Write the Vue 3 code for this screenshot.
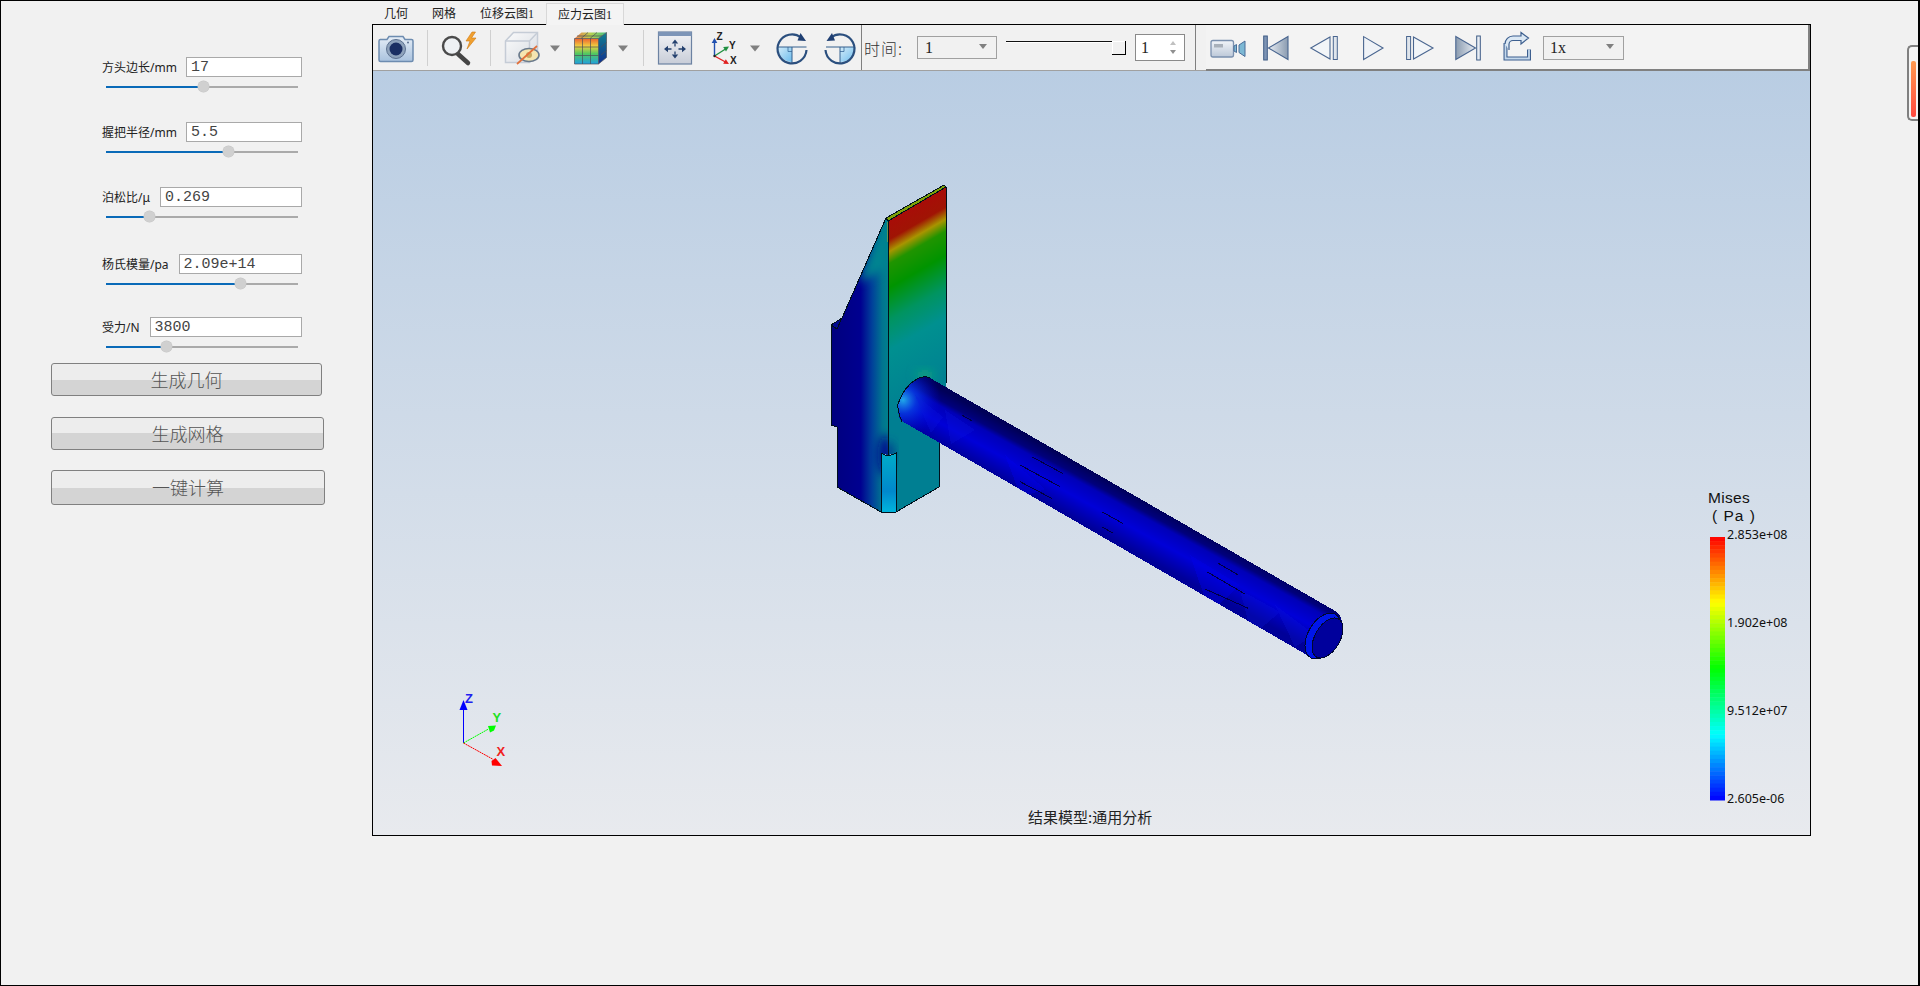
<script setup>
const params = [
  { label: '方头边长/mm', value: '17', pct: 50.5 },
  { label: '握把半径/mm', value: '5.5', pct: 63.5 },
  { label: '泊松比/μ', value: '0.269', pct: 22.4 },
  { label: '杨氏模量/pa', value: '2.09e+14', pct: 69.8 },
  { label: '受力/N', value: '3800', pct: 31.3 },
]
const actions = ['生成几何', '生成网格', '一键计算']
const tabs = ['几何', '网格', '位移云图1', '应力云图1']

function jet(t) {
  const stops = [[255, 0, 0], [255, 255, 0], [0, 255, 0], [0, 255, 255], [0, 0, 255]]
  const p = t * 4
  const i = Math.min(3, Math.floor(p))
  const f = p - i
  const c = stops[i].map((v, k) => Math.round(v + (stops[i + 1][k] - v) * f))
  return `rgb(${c[0]},${c[1]},${c[2]})`
}
const bands = Array.from({ length: 64 }, (_, i) => ({
  y: 537 + (i * 263) / 64,
  h: 263 / 64 + 0.5,
  fill: jet((i + 0.5) / 64),
}))
const legend = [
  { y: 539, t: '2.853e+08' },
  { y: 627, t: '1.902e+08' },
  { y: 715, t: '9.512e+07' },
  { y: 803, t: '2.605e-06' },
]
const handleMarks = [
  [245, 165, 275, 182], [455, 290, 548, 340], [420, 315, 540, 380], [420, 365, 515, 415],
  [665, 455, 728, 490], [665, 500, 700, 520], [1015, 610, 1075, 645], [980, 635, 1095, 702], [975, 687, 1105, 745],
].map(([a, b, c, d]) => ({ x1: 880 + a / 3, y1: 360 + b / 3, x2: 880 + c / 3, y2: 360 + d / 3 }))
</script>

<template>
  <div class="window">
    <aside class="side">
      <div v-for="p in params" :key="p.label" class="param">
        <div class="param-top">
          <span class="param-label">{{ p.label }}</span>
          <div class="param-input">{{ p.value }}</div>
        </div>
        <div class="track">
          <div class="track-fill" :style="{ width: p.pct + '%' }"></div>
          <div class="thumb" :style="{ left: p.pct + '%' }"></div>
        </div>
      </div>
      <div class="actions">
        <button v-for="a in actions" :key="a" class="action">{{ a }}</button>
      </div>
    </aside>

    <main class="main">
      <nav class="tabs">
        <span v-for="(t, i) in tabs" :key="t" class="tab" :class="{ active: i === 3 }">{{ t }}</span>
      </nav>
      <section class="frame">
        <div class="tb">
          <div class="tb-left">
            <svg class="ic ml6" width="34" height="36" viewBox="379 30 34 36">
              <defs>
                <linearGradient id="camBody" x1="0" y1="0" x2="0" y2="1"><stop offset="0" stop-color="#e6eef7"/><stop offset="1" stop-color="#a9c2de"/></linearGradient>
              </defs>
              <path d="M380 39.500h7l2-3h14l2 3h6.500a1.500 1.500 0 0 1 1.500 1.500v19a1.500 1.500 0 0 1-1.500 1.500h-31a1.500 1.500 0 0 1-1.500-1.500v-19a1.500 1.500 0 0 1 1.500-1.500z" fill="url(#camBody)" stroke="#6d8cb0" stroke-width="1.500"/>
              <circle cx="396" cy="49" r="9.500" fill="#8fa3bc" stroke="#5c7190" stroke-width="1"/>
              <circle cx="396" cy="49" r="6.500" fill="#1b2f63"/>
              <circle cx="408" cy="42.500" r="1" fill="#5c7190"/>
            </svg>
            <span class="sep ml14"></span>
            <svg class="ic ml14" width="34" height="36" viewBox="442 30 34 36">
              <path d="M472 32l-6 9h4l-3 8 9-11h-4.500l4-6z" fill="#f0a030" stroke="#d07a10" stroke-width=".6"/>
              <path d="M458 54l10 9" stroke="#454545" stroke-width="4.500" stroke-linecap="round"/>
              <circle cx="452" cy="46" r="9" fill="#eef1f4" stroke="#4a4a4a" stroke-width="2.400"/>
            </svg>
            <span class="sep ml14"></span>
            <svg class="ic ml14" width="35" height="36" viewBox="505 30 35 36">
              <defs>
                <linearGradient id="cubeFront" x1="0" y1="0" x2="1" y2="1"><stop offset="0" stop-color="#fbfbfb"/><stop offset="1" stop-color="#d6dbe2"/></linearGradient>
              </defs>
              <path d="M505.500 41l8-8.500h24v21l-8 9h-24z" fill="url(#cubeFront)" stroke="#c5ccd6" stroke-width="1.500"/>
              <path d="M505.500 41h24l8-8.500M529.500 41v22" fill="none" stroke="#c5ccd6" stroke-width="1.500"/>
              <ellipse cx="529" cy="55" rx="10" ry="6.500" fill="#f5e5b0" stroke="#6a7a8c" stroke-width="1.600"/>
              <circle cx="529" cy="55" r="3" fill="#c8a860"/>
              <path d="M517 64l20-18" stroke="#e2703a" stroke-width="1.700"/>
            </svg>
            <svg class="ic ml10" width="10" height="36" viewBox="550 30 10 36"><path d="M550 45.500h10l-5 6z" fill="#808080"/></svg>
            <svg class="ic ml14" width="34" height="36" viewBox="574 30 34 36">
              <defs>
                <linearGradient id="rubF" x1="0" y1="0" x2="0" y2="1"><stop offset="0" stop-color="#ee6030"/><stop offset=".3" stop-color="#f0d040"/><stop offset=".6" stop-color="#50c860"/><stop offset="1" stop-color="#20a0e0"/></linearGradient>
                <linearGradient id="rubT" x1="0" y1="0" x2="1" y2="0"><stop offset="0" stop-color="#f08050"/><stop offset=".5" stop-color="#b8d050"/><stop offset="1" stop-color="#40c080"/></linearGradient>
                <linearGradient id="rubR" x1="0" y1="0" x2="0" y2="1"><stop offset="0" stop-color="#108090"/><stop offset="1" stop-color="#103090"/></linearGradient>
              </defs>
              <path d="M574.500 38.500h24v25.500h-24z" fill="url(#rubF)"/>
              <path d="M574.500 38.500l7-6h25l-8 6z" fill="url(#rubT)"/>
              <path d="M598.500 38.500l8-6v25l-8 6.500z" fill="url(#rubR)"/>
              <path d="M574.500 38.500h24v25.500h-24zM582.500 38.500v25.500M590.500 38.500v25.500M574.500 47h24M574.500 55.500h24M598.500 38.500l8-6v25l-8 6.500M601 47l5.500-4.500M601 55l5.500-4.500M581 38.500l7-6M590 38.500l7-6M577 36h25" fill="none" stroke="#4a4f58" stroke-width=".7"/>
            </svg>
            <svg class="ic ml10" width="10" height="36" viewBox="618 30 10 36"><path d="M618 45.500h10l-5 6z" fill="#808080"/></svg>
            <span class="sep ml15"></span>
            <svg class="ic ml14" width="34" height="36" viewBox="658 30 34 36">
              <defs>
                <linearGradient id="fitB" x1="0" y1="0" x2="0" y2="1"><stop offset="0" stop-color="#f2f3f6"/><stop offset="1" stop-color="#c8cdd8"/></linearGradient>
              </defs>
              <rect x="658.500" y="32" width="33" height="32" fill="url(#fitB)" stroke="#6c82a2" stroke-width="1.200"/>
              <rect x="658.500" y="32" width="33" height="4" fill="#7d95b8"/>
              <path d="M675 39.500l-3.200 4h6.400zM675 58.500l-3.200-4h6.400zM664 49l4-3.200v6.400zM686 49l-4-3.200v6.400z" fill="#24406e"/>
              <path d="M675 43.500v3M675 51.500v3M668 49h3.500M678.500 49h3.500" stroke="#24406e" stroke-width="1.300"/>
            </svg>
            <svg class="ic ml20" width="28" height="36" viewBox="712 30 28 36">
              <path d="M714.500 56V42" stroke="#2050b0" stroke-width="1.400"/>
              <path d="M714.500 38l-2.800 5h5.600z" fill="#2050b0"/>
              <path d="M714.500 56l11-7" stroke="#209040" stroke-width="1.400"/>
              <path d="M729 46.500l-5.800.5 2.800 4.400z" fill="#209040"/>
              <path d="M714.500 56l11 6" stroke="#e02020" stroke-width="1.400"/>
              <path d="M729 64l-5.800-.2 2.600-4.600z" fill="#e02020"/>
              <circle cx="714.500" cy="56" r="1.200" fill="#222"/>
              <text x="716.500" y="39.500" class="axis-letter">Z</text>
              <text x="729" y="49" class="axis-letter">Y</text>
              <text x="730" y="64" class="axis-letter">X</text>
            </svg>
            <svg class="ic ml10" width="10" height="36" viewBox="750 30 10 36"><path d="M750 45.500h10l-5 6z" fill="#808080"/></svg>
            <svg class="ic ml16" width="32" height="36" viewBox="776 30 32 36">
              <defs>
                <linearGradient id="rotF" x1="0" y1="0" x2="1" y2="1"><stop offset="0" stop-color="#d4ecf9"/><stop offset="1" stop-color="#6cbcec"/></linearGradient>
              </defs>
              <path d="M777.500 47h14.500v15A15 15 0 0 1 777.500 47z" fill="url(#rotF)"/>
              <path d="M788 47v4.500h4" fill="none" stroke="#3a6a9a" stroke-width=".8"/>
              <path d="M777.500 47h29M792 47v16" stroke="#35608e" stroke-width="1"/>
              <path d="M801 37.500A14.500 14.500 0 1 0 806.500 50" fill="none" stroke="#2b4f7e" stroke-width="2.200"/>
              <path d="M806 41l-8.500-.5 3-7.500z" fill="#1f3f72"/>
            </svg>
            <svg class="ic ml17" width="32" height="36" viewBox="825 30 32 36">
              <path d="M855.500 47h-15.500v15a15 15 0 0 0 15.500-15z" fill="url(#rotF)"/>
              <path d="M844 47v4.500h-4" fill="none" stroke="#3a6a9a" stroke-width=".8"/>
              <path d="M826 47h29M840 47v16" stroke="#35608e" stroke-width="1"/>
              <path d="M831 37.500A14.500 14.500 0 1 1 825.500 50" fill="none" stroke="#2b4f7e" stroke-width="2.200"/>
              <path d="M826.500 41l8.500-.5-3-7.500z" fill="#1f3f72"/>
            </svg>
            <span class="sep-dark ml4"></span>
            <span class="time-label">时间:</span>
            <div class="combo combo-time"><span>1</span><i class="caret"></i></div>
            <div class="hslider"><div class="hslider-line"></div><div class="hslider-knob"></div></div>
            <div class="spin"><span>1</span><div class="spin-arrows"><i class="up"></i><i class="down"></i></div></div>
            <span class="sep-dark ml10"></span>
          </div>
          <div class="tb-right">
            <svg class="ic ml4" width="36" height="36" viewBox="1210 30 36 36">
              <defs>
                <linearGradient id="cc" x1="0" y1="0" x2="0" y2="1"><stop offset="0" stop-color="#f2f5f9"/><stop offset="1" stop-color="#bcc8d8"/></linearGradient>
              </defs>
              <rect x="1211" y="40.500" width="22.500" height="16.500" rx="2" fill="url(#cc)" stroke="#7a90ae" stroke-width="1.300"/>
              <rect x="1214" y="44" width="9" height="3.500" fill="#a8b0ba"/>
              <path d="M1234 46l2.500-1.500v8L1234 51zM1239 45l6-4v15.500l-6-4z" fill="#7cb8d4" stroke="#4a6c98" stroke-width="1"/>
            </svg>
            <svg class="ic ml17" width="26" height="36" viewBox="1263 30 26 36">
              <defs>
                <linearGradient id="tg" x1="0" y1="0" x2="1" y2="0"><stop offset="0" stop-color="#e8edf3"/><stop offset="1" stop-color="#8a9bb0"/></linearGradient>
                <linearGradient id="tgr" x1="0" y1="0" x2="1" y2="0"><stop offset="0" stop-color="#8a9bb0"/><stop offset="1" stop-color="#e8edf3"/></linearGradient>
              </defs>
              <rect x="1263.700" y="36" width="3.600" height="24" fill="#7d94b4" stroke="#3f5c86" stroke-width="1"/>
              <path d="M1268.500 48l19.500-11.500v23z" fill="url(#tg)" stroke="#4a6690" stroke-width="1.100"/>
            </svg>
            <svg class="ic ml21" width="28" height="36" viewBox="1310 30 28 36">
              <path d="M1310.800 48l19.200-11v22z" fill="#f2f5f8" stroke="#4a6690" stroke-width="1.100"/>
              <rect x="1333.300" y="36.500" width="4" height="23" fill="#dfe5ec" stroke="#4a6690" stroke-width="1"/>
            </svg>
            <svg class="ic ml25" width="21" height="36" viewBox="1363 30 21 36">
              <path d="M1363.600 36.600l19.400 11.400-19.400 11.500z" fill="#f0f3f7" stroke="#4a6690" stroke-width="1.100"/>
            </svg>
            <svg class="ic ml22" width="28" height="36" viewBox="1406 30 28 36">
              <rect x="1406.600" y="36.500" width="4" height="23" fill="#dfe5ec" stroke="#4a6690" stroke-width="1"/>
              <path d="M1413.500 37l19.500 11-19.500 11z" fill="#f2f5f8" stroke="#4a6690" stroke-width="1.100"/>
            </svg>
            <svg class="ic ml21" width="26" height="36" viewBox="1455 30 26 36">
              <path d="M1455.800 36.500l19.700 11.500-19.700 11.500z" fill="url(#tgr)" stroke="#4a6690" stroke-width="1.100"/>
              <rect x="1476.700" y="36" width="3.600" height="24" fill="#e8edf3" stroke="#3f5c86" stroke-width="1"/>
            </svg>
            <svg class="ic ml22" width="28" height="36" viewBox="1503 30 28 36">
              <path d="M1505.500 43v15.500h23.500v-9" fill="none" stroke="#3d5f8f" stroke-width="4"/>
              <path d="M1505.500 43v15.500h23.500v-9" fill="none" stroke="#c4d8ec" stroke-width="1.800"/>
              <path d="M1509 50v-5.500a4 4 0 0 1 4-4h8V44l7.500-6-7.500-5.500V36h-8a8 8 0 0 0-8 8" fill="#dbe8f4" stroke="#3d5f8f" stroke-width="1.200"/>
            </svg>
            <div class="combo combo-speed"><span>1x</span><i class="caret"></i></div>
          </div>
        </div>

        <div class="view">
          <svg class="scene" width="1437" height="764" viewBox="373 71 1437 764">
            <defs>
              <linearGradient id="rightFace" gradientUnits="userSpaceOnUse" x1="916" y1="204" x2="1003" y2="355">
                <stop offset="0" stop-color="#a80c08"/>
                <stop offset=".1" stop-color="#a01404"/>
                <stop offset=".16" stop-color="#a89400"/>
                <stop offset=".22" stop-color="#209400"/>
                <stop offset=".34" stop-color="#009400"/>
                <stop offset=".5" stop-color="#009460"/>
                <stop offset=".65" stop-color="#009090"/>
                <stop offset="1" stop-color="#007f92"/>
              </linearGradient>
              <linearGradient id="leftFace" gradientUnits="userSpaceOnUse" x1="831" y1="0" x2="888" y2="0">
                <stop offset="0" stop-color="#00007e"/>
                <stop offset=".52" stop-color="#000090"/>
                <stop offset=".72" stop-color="#00409a"/>
                <stop offset=".9" stop-color="#007490"/>
                <stop offset="1" stop-color="#00808c"/>
              </linearGradient>
              <linearGradient id="slotFace" x1="0" y1="0" x2="0" y2="1">
                <stop offset="0" stop-color="#00acc8"/>
                <stop offset=".65" stop-color="#0088cc"/>
                <stop offset="1" stop-color="#00b4dc"/>
              </linearGradient>
              <linearGradient id="handleG" gradientUnits="userSpaceOnUse" x1="1100" y1="476" x2="1076" y2="520">
                <stop offset="0" stop-color="#000058"/>
                <stop offset=".2" stop-color="#00007c"/>
                <stop offset=".3" stop-color="#0000b8"/>
                <stop offset=".6" stop-color="#0000d8"/>
                <stop offset=".85" stop-color="#0000b0"/>
                <stop offset="1" stop-color="#000098"/>
              </linearGradient>
              <radialGradient id="handleGlow" gradientUnits="userSpaceOnUse" cx="903" cy="400" r="38">
                <stop offset="0" stop-color="#20a8e8"/>
                <stop offset=".35" stop-color="#0840e0" stop-opacity=".8"/>
                <stop offset="1" stop-color="#0000d8" stop-opacity="0"/>
              </radialGradient>
              <filter id="soft" x="-50%" y="-50%" width="200%" height="200%"><feGaussianBlur stdDeviation="5"/></filter>
              <clipPath id="leftClip"><path d="M888 221L886 219L842 318L837 329L831 325V425L837 427V487L881 512V453L888 455z"/></clipPath>
              <clipPath id="rightClip"><path d="M888 221L946 187V383L939 443V487L896 512V453L888 455z"/></clipPath>
              <clipPath id="handleClip"><path d="M930 378L1337 612Q1344 618 1342 633Q1338 650 1317 659L1307 655L900 420Q897 410 898 404Q904 386 917 379Q924 375 930 378z"/></clipPath>
            </defs>

            <g>
              <path d="M463.500 743V708" stroke="#0000ff" stroke-width="1"/>
              <path d="M463.500 700l-4 10h8z" fill="#0000ff"/>
              <text x="465" y="703" fill="#2020f0" class="triad-letter">Z</text>
              <path d="M463.500 743l25-14" stroke="#00ff00" stroke-width="1" stroke-dasharray="2 .6"/>
              <path d="M496 725.500l-8 .5 2 6.500 4-2z" fill="#00ff00"/>
              <text x="492.500" y="722" fill="#20e020" class="triad-letter">Y</text>
              <path d="M463.500 743l29 16" stroke="#ff0000" stroke-width="1" stroke-dasharray="2 .6"/>
              <path d="M502 766l-10-.5-.5-4.500 4-3z" fill="#ff0000"/>
              <text x="496.500" y="756" fill="#f02020" class="triad-letter">X</text>
            </g>

            <g class="model">
              <path d="M888 221L886 219L842 318L837 329L831 325V425L837 427V487L881 512V453L888 455z" fill="url(#leftFace)"/>
              <path d="M842 318L837 329L831 325z" fill="#000a90"/>
              <g clip-path="url(#leftClip)">
                <path d="M886 219L858 282L872 276L888 268V219z" fill="#008490" filter="url(#soft)"/>
                <ellipse cx="885" cy="455" rx="7" ry="20" fill="#000a90" filter="url(#soft)"/>
              </g>
              <path d="M888 221L946 187V383L939 443V487L896 512V453L888 455z" fill="url(#rightFace)"/>
              <g clip-path="url(#rightClip)">
                <ellipse cx="925" cy="375" rx="10" ry="5" fill="#10a080" filter="url(#soft)"/>
                <ellipse cx="889" cy="455" rx="5" ry="14" fill="#003a90" filter="url(#soft)"/>
              </g>
              <path d="M886 218L944 185L946 187L888 221z" fill="#7ca008"/>
              <path d="M887 222L889 262" stroke="#a0a030" stroke-width="1" opacity=".6"/>
              <path d="M881 453Q888 458 896 453V512H881z" fill="url(#slotFace)"/>
              <path d="M886 218L842 318L837 329L831 325V425L837 427V487L881 512H896L939 487V443M946 383V187L944 185L886 218M831 325L842 318M888.500 221V455M881 512V453Q888 458 896 453V512M886 218L888 221L946 187" fill="none" stroke="#00101c" stroke-width="1"/>
              <path d="M930 378L1337 612Q1344 618 1342 633Q1338 650 1317 659L1307 655L900 420Q897 410 898 404Q904 386 917 379Q924 375 930 378z" fill="url(#handleG)"/>
              <g clip-path="url(#handleClip)">
                <path d="M930 378L1000 418L960 470L900 420Q897 410 898 404Q904 386 917 379Q924 375 930 378z" fill="url(#handleGlow)"/>
                <path d="M915 395l28 22-12 16zM945 410l30 20-24 14zM1240 590l40 22-28 24zM1275 605l40 30-20 12z" fill="#0a18e0" opacity=".25"/>
                <path d="M1190 555l50 30-30 28zM1005 455l40 34-24 8z" fill="#0000e8" opacity=".4"/>
              </g>
              <ellipse cx="1323" cy="636" rx="15" ry="25" transform="rotate(30 1323 636)" fill="#0016ea" stroke="#000830" stroke-width="1"/>
              <ellipse cx="1327.500" cy="638" rx="12.500" ry="22" transform="rotate(30 1327.500 638)" fill="#00009c" stroke="#000830" stroke-width="1"/>
              <path d="M902 422Q897 410 898 404Q904 386 917 379Q924 375 930 378" fill="none" stroke="#00101c" stroke-width="1"/>
              <line v-for="(m, i) in handleMarks" :key="i" :x1="m.x1" :y1="m.y1" :x2="m.x2" :y2="m.y2" stroke="#000040" stroke-width="1"/>
            </g>

            <text x="1708" y="503" class="legend-title">Mises</text>
            <text x="1712" y="521" class="legend-title legend-unit">( Pa )</text>
            <rect v-for="(b, i) in bands" :key="i" x="1710" :y="b.y" width="15" :height="b.h" :fill="b.fill"/>
            <text v-for="l in legend" :key="l.t" x="1727" :y="l.y" class="legend-val">{{ l.t }}</text>
            <text x="1028" y="823" class="caption">结果模型:通用分析</text>
          </svg>
        </div>
      </section>
    </main>

    <div class="scroll-handle"><div class="scroll-fill"></div></div>
  </div>
</template>

<style>
html, body { margin: 0; padding: 0; background: #f1f1f1; overflow: hidden; }
</style>

<style scoped>
.window {
  position: relative;
  box-sizing: border-box;
  width: 1920px;
  height: 986px;
  border: 1px solid #000;
  border-width: 1px 2px 1px 1px;
  background: #f1f1f1;
  display: flex;
  overflow: hidden;
  font-family: "Noto Sans", "Noto Sans CJK SC", sans-serif;
}
.side {
  width: 371px;
  flex: none;
  box-sizing: border-box;
  padding-top: 56px;
  display: flex;
  flex-direction: column;
}
.param { padding-left: 101px; width: 200px; margin-bottom: 34px; box-sizing: content-box; }
.param:nth-child(3) { margin-bottom: 36px; }
.param:nth-child(4) { margin-bottom: 32px; }
.param:nth-child(5) { margin-bottom: 0; }
.param-top { display: flex; align-items: center; gap: 9px; height: 20px; }
.param:nth-child(n+3) .param-top { gap: 10px; }
.param-label { font-size: 12px; color: #222; white-space: nowrap; line-height: 20px; padding-top: 2px; }
.param-input {
  flex: 1;
  box-sizing: border-box;
  height: 20px;
  background: #fff;
  border: 1px solid #a9a9a9;
  padding-left: 4px;
  font: 15px/20px "Liberation Mono", monospace;
  color: #444;
}
.track { position: relative; margin: 9px 0 0 4px; width: 192px; height: 2px; background: #aaa; }
.track-fill { height: 2px; background: #0a6ab8; }
.thumb {
  position: absolute;
  top: -5px;
  width: 11px;
  height: 11px;
  margin-left: -5px;
  border-radius: 50%;
  background: #d0d0d0;
  box-shadow: 0 0 0 .5px #c4c4c4;
}
.actions { padding: 15px 0 0 50px; display: flex; flex-direction: column; gap: 21px; align-items: flex-start; }
.action {
  width: 271px;
  height: 33px;
  padding: 0;
  box-sizing: border-box;
  border: 1px solid #808080;
  border-radius: 3px;
  background: linear-gradient(#ededed 0, #ededed 50%, #d4d4d4 50%, #d4d4d4 100%);
  font: 300 18px/31px "Noto Sans CJK SC", sans-serif;
  color: #555;
}
.action:nth-child(2) { width: 273px; }
.action:nth-child(3) { width: 274px; height: 35px; margin-top: -1px; }

.main { flex: none; display: flex; flex-direction: column; width: 1439px; }
.tabs { display: flex; height: 23px; align-items: flex-end; }
.tab {
  box-sizing: border-box;
  height: 22px;
  padding: 0 11px;
  font: 12px/22px "Liberation Serif", "Noto Sans CJK SC", sans-serif;
  color: #222;
  border: 1px solid transparent;
  border-bottom: 0;
}
.tab.active { background: #f4f4f4; border-color: #d8d8d8; position: relative; top: 1px; }
.frame {
  box-sizing: border-box;
  width: 1439px;
  height: 812px;
  border: 1px solid #000;
  display: flex;
  flex-direction: column;
}
.tb { display: flex; height: 46px; flex: none; }
.tb-left {
  width: 833px;
  box-sizing: border-box;
  height: 46px;
  padding-top: 5px;
  display: flex;
  align-items: flex-start;
  border-bottom: 1px solid #a0a0a0;
}
.tb-right {
  flex: 1;
  box-sizing: border-box;
  height: 46px;
  padding-top: 5px;
  display: flex;
  align-items: flex-start;
  background: #f3f3f3;
  border-bottom: 2px solid #808080;
  border-right: 2px solid #808080;
}
.ic { display: block; flex: none; overflow: visible; }
.ml4 { margin-left: 4px; }
.ml6 { margin-left: 6px; }
.ml10 { margin-left: 10px; }
.ml14 { margin-left: 14px; }
.ml15 { margin-left: 15px; }
.ml16 { margin-left: 16px; }
.ml17 { margin-left: 17px; }
.ml20 { margin-left: 20px; }
.ml21 { margin-left: 21px; }
.ml22 { margin-left: 22px; }
.ml25 { margin-left: 25px; }
.sep { display: block; flex: none; width: 1px; height: 36px; background: #d0d0d0; }
.sep-dark { display: block; flex: none; width: 1px; height: 45px; margin-top: -5px; background: #808080; }
.axis-letter { font: bold 10px "Liberation Sans", sans-serif; fill: #222; }
.time-label {
  margin-left: 2px;
  width: 42px;
  flex: none;
  font: 300 16px/36px "Noto Sans CJK SC", sans-serif;
  letter-spacing: 1px;
  color: #333;
  white-space: nowrap;
}
.combo {
  box-sizing: border-box;
  position: relative;
  flex: none;
  background: #f1f1f1;
  border: 1px solid #a0a0a0;
  font-family: "Liberation Serif", serif;
  color: #222;
}
.combo-time { width: 80px; height: 23px; margin: 6px 0 0 11px; padding-left: 7px; font-size: 16px; line-height: 21px; }
.combo-speed { width: 81px; height: 24px; margin: 6px 0 0 12px; padding-left: 6px; font-size: 16px; line-height: 22px; }
.caret {
  position: absolute;
  right: 9px;
  top: 7px;
  width: 0;
  height: 0;
  border: 4px solid transparent;
  border-width: 5px 4px 0;
  border-top-color: #808080;
}
.hslider { position: relative; flex: none; width: 120px; height: 36px; margin-left: 9px; }
.hslider-line { position: absolute; left: 0; right: 14px; top: 11px; height: 1px; background: #111; box-shadow: 0 1px 0 #fff; }
.hslider-knob {
  position: absolute;
  right: 0;
  top: 11px;
  width: 14px;
  height: 14px;
  box-sizing: border-box;
  background: #f1f1f1;
  border-right: 1px solid #000;
  border-bottom: 1px solid #000;
  box-shadow: inset 1px 1px 0 #fff;
}
.spin {
  box-sizing: border-box;
  flex: none;
  position: relative;
  width: 50px;
  height: 27px;
  margin: 4px 0 0 9px;
  background: #fff;
  border: 1px solid #8a8a8a;
  padding-left: 5px;
  font: 16px/25px "Liberation Serif", serif;
  color: #222;
}
.spin-arrows { position: absolute; right: 8px; top: 6px; display: flex; flex-direction: column; gap: 5px; }
.spin-arrows i { display: block; width: 0; height: 0; border: 3px solid transparent; border-width: 0 3px; }
.spin-arrows .up { border-bottom: 4px solid #c0c0c0; }
.spin-arrows .down { border-top: 4px solid #909090; }

.view {
  flex: 1;
  height: 764px;
  background: linear-gradient(#b9cde3, #e8eaee);
  overflow: hidden;
}
.scene { display: block; }
.model { shape-rendering: crispEdges; }
.triad-letter { font: bold 13px "Liberation Sans", sans-serif; }
.legend-title { font: 15.500px "Liberation Sans", sans-serif; fill: #111; letter-spacing: .3px; }
.legend-unit { letter-spacing: 1px; }
.legend-val { font: 12.500px "Noto Sans", sans-serif; fill: #111; }
.caption { font: 15px "Noto Sans CJK SC", sans-serif; fill: #222; }

.scroll-handle {
  position: absolute;
  right: 0;
  top: 44px;
  width: 11px;
  height: 76px;
  box-sizing: border-box;
  border: 2px solid #808080;
  border-right: 0;
  border-radius: 5px 0 0 5px;
  background: #f4f4f4;
  padding: 14px 2px 2px;
}
.scroll-fill { height: 100%; border-radius: 2px; background: linear-gradient(#ff9a50, #ff4a40); }
</style>
